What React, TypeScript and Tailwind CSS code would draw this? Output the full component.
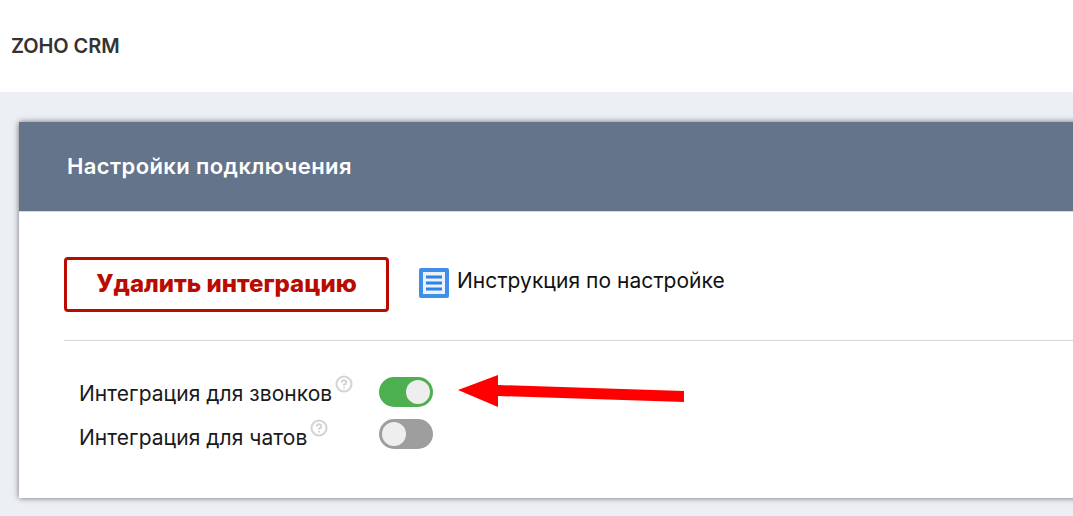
import { CircleHelp } from 'lucide-react';

function Toggle({ on }: { on: boolean }) {
  return (
    <div
      className={`flex h-[30px] w-[54px] items-center rounded-full px-[3px] ${
        on ? 'justify-end bg-[#4caf50]' : 'justify-start bg-[#9e9e9e]'
      }`}
    >
      <div className="h-6 w-6 rounded-full bg-[#eeeeee]" />
    </div>
  );
}

function IntegrationRow({ label, on, labelClass }: { label: string; on: boolean; labelClass: string }) {
  return (
    <div className="flex h-[30px] items-start">
      <div className={`flex w-[315px] items-start pl-[15px] ${labelClass}`}>
        <span className="text-[21px] leading-[30px] tracking-[0.05px] text-[#1a1a1a]">{label}</span>
        <CircleHelp className="ml-[3px] mt-[-4px] h-[18px] w-[18px] text-[#d4d4d4]" strokeWidth={2.8} />
      </div>
      <Toggle on={on} />
    </div>
  );
}

export default function App() {
  return (
    <div className="relative h-[516px] w-[1073px] overflow-hidden bg-[#eceff4] font-['Inter','Roboto',sans-serif]">
      <header className="flex h-[92px] items-center bg-white pl-[11px]">
        <span className="text-[20px] font-semibold tracking-[-0.1px] text-[#333333]">ZOHO CRM</span>
      </header>

      <div className="ml-[19px] mt-[30px] h-[376px] w-[1100px] bg-white shadow-[0_0_6px_rgba(0,0,0,0.55)]">
        <div className="flex h-[90px] items-center border-b border-[#d4d8de] bg-[#64748a] pl-[48px]">
          <h2 className="text-[22px] font-semibold tracking-[0.4px] text-white">Настройки подключения</h2>
        </div>

        <div className="pl-[45px] pt-[45px]">
          <div className="flex items-start">
            <button
              type="button"
              className="h-[55px] w-[325px] rounded-[4px] border-[3px] border-[#b90b00] pb-[2px] text-[24px] font-extrabold text-[#b90b00]"
            >
              Удалить интеграцию
            </button>
            <div className="ml-[30px] mt-[8px] flex items-center gap-[8px]">
              <svg viewBox="0 0 30 30" className="h-[30px] w-[30px]" aria-hidden="true">
                <rect width="30" height="30" rx="2" fill="#3f8ee8" />
                <rect x="4" y="4" width="22" height="22" fill="#eaf2fc" />
                <rect x="7" y="7.5" width="16" height="3" fill="#2f80e8" />
                <rect x="7" y="13.5" width="16" height="3" fill="#2f80e8" />
                <rect x="7" y="19.5" width="16" height="3" fill="#2f80e8" />
              </svg>
              <span className="pb-[4px] text-[21px] tracking-[0.05px] text-[#111111]">Инструкция по настройке</span>
            </div>
          </div>

          <div className="mt-[28px] border-t border-[#d6d6d6] pt-[36px]">
            <div className="flex flex-col gap-3">
              <IntegrationRow label="Интеграция для звонков" on labelClass="pt-[2px]" />
              <IntegrationRow label="Интеграция для чатов" on={false} labelClass="pt-[4px]" />
            </div>
          </div>
        </div>
      </div>

      <svg
        viewBox="0 0 228 32"
        className="absolute left-[458px] top-[375px] h-[32px] w-[228px]"
        aria-hidden="true"
      >
        <path d="M0 15 L40 0 L40 10 L226 16 L226 27 L40 21 L40 32 Z" fill="#ff0000" />
      </svg>
    </div>
  );
}
